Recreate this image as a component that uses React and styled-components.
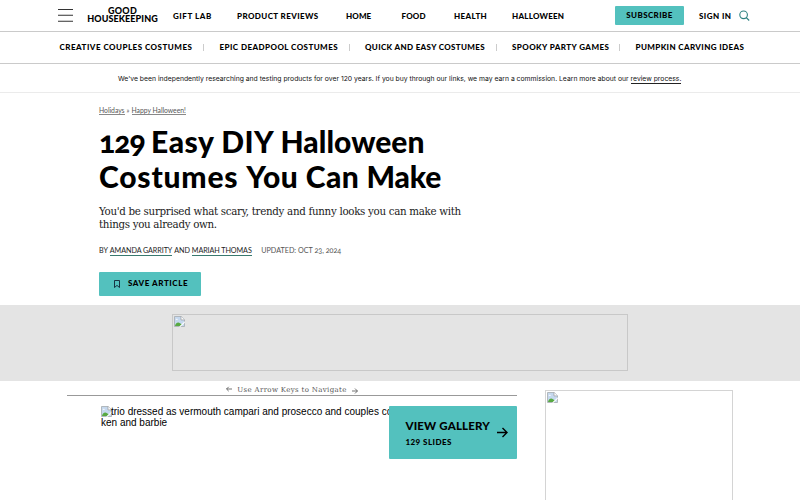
import React from 'react';
import styled, { createGlobalStyle } from 'styled-components';

const teal = '#53c1be';

const GlobalStyle = createGlobalStyle`
  * { box-sizing: border-box; }
  body { margin: 0; background: #fff; overflow: hidden; }
  a { color: inherit; text-decoration: none; }
`;

const Page = styled.div`
  width: 800px;
  height: 500px;
  overflow: hidden;
  color: #000;
  font-family: Lato, sans-serif;
`;

const Header = styled.header`
  display: flex;
  height: 32px;
  padding-left: 58px;
  border-bottom: 1px solid #cacaca;
  white-space: nowrap;
`;

const MenuButton = styled.div`
  width: 29px;
  padding-top: 9px;
  svg { display: block; }
`;

const Logo = styled.div`
  width: 86px;
  padding-top: 7px;
  font-size: 9px;
  font-weight: 900;
  line-height: 8px;
`;

const LogoLine = styled.div`
  width: 71px;
  text-align: center;
  letter-spacing: ${(p) => p.$spacing}px;
`;

const MainNav = styled.nav`
  display: grid;
  grid-template-columns: 64px 109px 55.5px 52.5px 58px 103px;
`;

const NavLink = styled.a`
  font-size: 8px;
  font-weight: 900;
  line-height: 32px;
  letter-spacing: ${(p) => p.$spacing}px;
`;

const Subscribe = styled.a`
  width: 69px;
  height: 19px;
  margin: 6px 15px 0 0;
  border-radius: 1px;
  background: ${teal};
  font-size: 8px;
  font-weight: 900;
  line-height: 18px;
  letter-spacing: 0.39px;
  text-align: center;
`;

const SearchIcon = styled.svg`
  margin: 10px 0 0 7.5px;
`;

const TopicNav = styled.nav`
  display: flex;
  height: 32px;
  padding-left: 59.5px;
  border-bottom: 1px solid #cacaca;
  white-space: nowrap;
`;

const Topic = styled.a`
  width: ${(p) => p.$width}px;
  font-size: 8px;
  font-weight: 900;
  line-height: 31px;
  letter-spacing: ${(p) => p.$spacing}px;
`;

const Divider = styled.span`
  width: 1px;
  height: 7px;
  margin: 12px 15.5px 0 -0.5px;
  background: #ccc;
`;

const Disclosure = styled.div`
  height: 29px;
  padding-left: 118px;
  border-bottom: 1px solid #ebebeb;
  font: 400 6.82px/29px Inter, sans-serif;
  white-space: nowrap;
  color: #111;
  a { border-bottom: 1px solid #222; }
`;

const Article = styled.section`
  height: 212px;
  padding-left: 99px;
  font-feature-settings: 'onum';
`;

const Breadcrumbs = styled.div`
  display: flex;
  padding-top: 12px;
  height: 31px;
  font-size: 6.8px;
  line-height: 10px;
  letter-spacing: -0.02px;
  color: #555;
  a { height: 10px; border-bottom: 1px solid #888; white-space: nowrap; }
  span { width: 7px; text-align: center; }
`;

const Title = styled.h1`
  margin: 0;
  font-size: 30px;
  font-weight: 900;
  line-height: 35.4px;
  white-space: nowrap;
`;

const TitleLine = styled.span`
  display: block;
`;

const Word = styled.span`
  letter-spacing: ${(p) => p.$spacing}px;
`;

const Dek = styled.p`
  margin: 10px 0 0;
  color: #222;
  font: 400 10.3px/13px 'DejaVu Serif', serif;
  letter-spacing: -0.31px;
`;

const Byline = styled.div`
  display: flex;
  gap: 2px;
  margin-top: 15px;
  font-size: 7.2px;
  line-height: 10px;
  letter-spacing: -0.08px;
  white-space: nowrap;
  color: #222;
  a { height: 10px; border-bottom: 1px solid #39796f; }
  time { margin-left: 7.5px; color: #555; letter-spacing: 0; }
`;

const SaveButton = styled.div`
  display: flex;
  width: 102px;
  height: 24px;
  margin-top: 16px;
  padding-left: 14px;
  border-radius: 1px;
  background: ${teal};
  font-size: 8px;
  font-weight: 900;
  line-height: 23px;
  letter-spacing: 0.57px;
  svg { margin: 8px 7px 0 0; }
`;

const AdBand = styled.div`
  height: 75.5px;
  padding: 9px 0 0 172px;
  background: #e4e4e4;
`;

const MissingImage = styled.div`
  width: ${(p) => p.$width}px;
  height: ${(p) => p.$height}px;
  padding: 1px;
  border: 1px solid ${(p) => p.$border};
  svg { display: block; }
`;

const Content = styled.main`
  display: grid;
  grid-template-columns: 450px 188px;
  column-gap: 28px;
  padding-left: 67px;
`;

const KeysHint = styled.div`
  display: flex;
  justify-content: center;
  height: 15.5px;
  border-bottom: 1px solid #999;
  color: #555;
  font: 400 7px/18px 'DejaVu Serif', serif;
  letter-spacing: 0.35px;
  svg { margin: 5px 5px 0; }
  svg:last-child { margin-top: 7px; }
`;

const Figure = styled.div`
  position: relative;
  height: 64px;
  padding: 9.5px 0 0 34px;
  overflow: hidden;
`;

const AltText = styled.div`
  width: 340px;
  font: 400 10px/11.3px 'Liberation Sans', sans-serif;
  white-space: nowrap;
  svg { vertical-align: -2px; margin-right: -1px; }
`;

const GalleryButton = styled.a`
  position: absolute;
  top: 9.5px;
  right: 0;
  display: flex;
  align-items: center;
  width: 127.6px;
  height: 53.5px;
  padding-left: 16px;
  border-radius: 1px;
  background: ${teal};
`;

const GalleryLabel = styled.div`
  width: 91.5px;
  padding-top: 3px;
  font-weight: 900;
  white-space: nowrap;
`;

const GalleryName = styled.div`
  font-size: 11.5px;
  line-height: 17px;
  letter-spacing: 0.17px;
`;

const GalleryCount = styled.div`
  font-size: 8px;
  line-height: 17px;
  letter-spacing: 0.45px;
`;

const Sidebar = styled.aside`
  padding-top: 9.5px;
`;

const BrokenIcon = () => (
  <svg width="11" height="11" viewBox="0 0 11 11">
    <path d="M.5.5h6.7l3.3 3.3v6.7H.5z" fill="#c5d8ee" stroke="#a5abae" strokeWidth=".8" />
    <path d="M1 9.8c1-3 3-4 5-2.6l2.2 1.5L6 10H1z" fill="#58a942" />
    <path d="M1.6 3.8c.2-1.4 2.2-1.2 2.2 0z" fill="#fff" />
    <path d="M7 .5v3.4h3.5" fill="#fff" stroke="#999" strokeWidth=".7" />
    <path d="M10.8 5.2 5 10.8h1.6l4.2-4z" fill="#fff" />
  </svg>
);

const Arrow = ({ size, left, weight = 1 }) => (
  <svg width={size} height={size} viewBox="0 0 11 11" fill="none" stroke="currentColor" strokeWidth={weight}>
    <path d={left ? 'M11 5.5H1M5 1.5l-4 4 4 4' : 'M0 5.5h10M5.5 1l4.5 4.5L5.5 10'} />
  </svg>
);

const navItems = [
  ['GIFT LAB', 0.55], ['PRODUCT REVIEWS', 0.4], ['HOME', 0.1],
  ['FOOD', 0.15], ['HEALTH', 0.38], ['HALLOWEEN', 0.23],
];

const topics = [
  ['CREATIVE COUPLES COSTUMES', 0.49, 144],
  ['EPIC DEADPOOL COSTUMES', 0.44, 129.5],
  ['QUICK AND EASY COSTUMES', 0.35, 131],
  ['SPOOKY PARTY GAMES', 0.42, 107.5],
  ['PUMPKIN CARVING IDEAS', 0.39, 110],
];

const titleLines = [
  [['129', -0.95], ['Easy', 0.5], ['DIY', 0.4], ['Halloween', 0.03]],
  [['Costumes', 0.8], ['You', 0.42], ['Can', 0.35], ['Make', -0.1]],
];

export default function App() {
  return (
    <Page>
      <GlobalStyle />
      <Header>
        <MenuButton>
          <svg width="15" height="13" viewBox="0 0 15 13" stroke="#333" strokeWidth="1.1">
            <path d="M0 .5h15M0 6.2h15M0 12.3h15" />
          </svg>
        </MenuButton>
        <Logo>
          <LogoLine $spacing={0.3}>GOOD</LogoLine>
          <LogoLine $spacing={0.09}>HOUSEKEEPING</LogoLine>
        </Logo>
        <MainNav>
          {navItems.map(([label, spacing]) => <NavLink key={label} $spacing={spacing}>{label}</NavLink>)}
        </MainNav>
        <Subscribe>SUBSCRIBE</Subscribe>
        <NavLink $spacing={0.44}>SIGN IN</NavLink>
        <SearchIcon width="11" height="11" viewBox="0 0 11 11" fill="none" stroke="#2d8180" strokeWidth="1.1">
          <circle cx="4.6" cy="4.8" r="3.8" />
          <path d="m7.2 7.5 3 3" />
        </SearchIcon>
      </Header>
      <TopicNav>
        {topics.map(([label, spacing, width], i) => (
          <React.Fragment key={label}>
            <Topic $spacing={spacing} $width={width}>{label}</Topic>
            {i < topics.length - 1 && <Divider />}
          </React.Fragment>
        ))}
      </TopicNav>
      <Disclosure>
        We've been independently researching and testing products for over 120 years. If you buy through our
        links, we may earn a commission. Learn more about our <a>review process.</a>
      </Disclosure>
      <Article>
        <Breadcrumbs><a>Holidays</a><span>»</span><a>Happy Halloween!</a></Breadcrumbs>
        <Title>
          {titleLines.map((line) => (
            <TitleLine key={line[0][0]}>
              {line.map(([word, spacing]) => (
                <Word key={word} $spacing={spacing}>{word} </Word>
              ))}
            </TitleLine>
          ))}
        </Title>
        <Dek>
          You'd be surprised what scary, trendy and funny looks you can make with
          <br />
          things you already own.
        </Dek>
        <Byline>
          <span>BY</span><a>AMANDA GARRITY</a><span>AND</span><a>MARIAH THOMAS</a>
          <time>UPDATED: OCT 23, 2024</time>
        </Byline>
        <SaveButton>
          <svg width="8" height="8" viewBox="0 0 8 8" fill="none" stroke="#123" strokeWidth=".9">
            <path d="M1.5.5h5v7L4 5.4 1.5 7.5z" />
          </svg>
          SAVE ARTICLE
        </SaveButton>
      </Article>
      <AdBand>
        <MissingImage $width={456} $height={57} $border="#c8c8c8"><BrokenIcon /></MissingImage>
      </AdBand>
      <Content>
        <div>
          <KeysHint>
            <Arrow size={6} left weight={1.5} />
            Use Arrow Keys to Navigate
            <Arrow size={6} weight={1.5} />
          </KeysHint>
          <Figure>
            <AltText>
              <BrokenIcon />trio dressed as vermouth campari and prosecco and couples costume
              <br />
              ken and barbie
            </AltText>
            <GalleryButton>
              <GalleryLabel>
                <GalleryName>VIEW GALLERY</GalleryName>
                <GalleryCount>129 SLIDES</GalleryCount>
              </GalleryLabel>
              <Arrow size={11} weight={1.4} />
            </GalleryButton>
          </Figure>
        </div>
        <Sidebar>
          <MissingImage $width={188} $height={160} $border="#d4d4d4"><BrokenIcon /></MissingImage>
        </Sidebar>
      </Content>
    </Page>
  );
}
